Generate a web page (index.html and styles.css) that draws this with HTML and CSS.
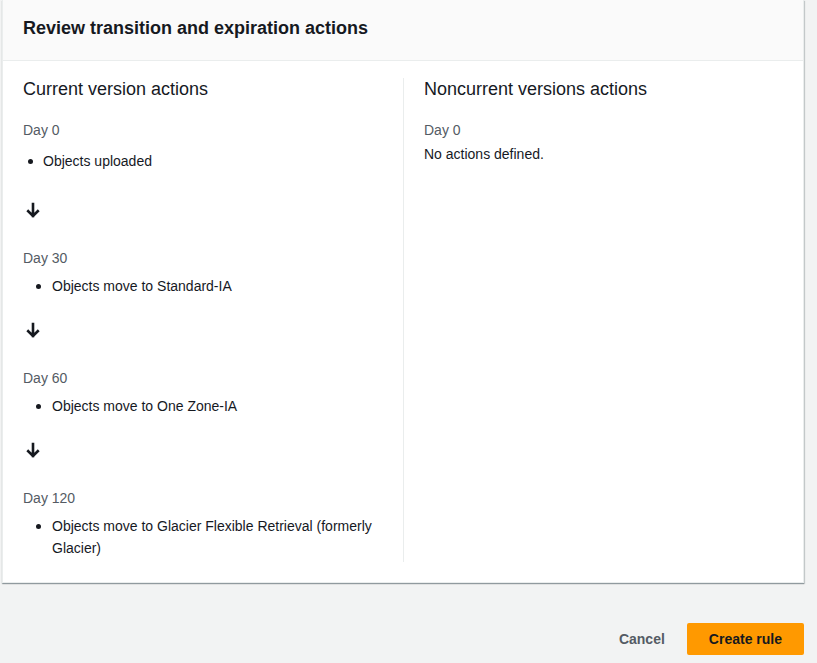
FILE: index.html
```html
<!DOCTYPE html>
<html lang="en">
<head>
<meta charset="utf-8">
<title>Review transition and expiration actions</title>
<link rel="stylesheet" href="styles.css">
</head>
<body>
<div class="page">
  <section class="card">
    <header class="card-header">
      <h1 class="card-title">Review transition and expiration actions</h1>
    </header>
    <div class="card-body">
      <div class="column">
        <h2 class="column-title">Current version actions</h2>
        <div class="day day-first">Day 0</div>
        <ul class="actions actions-first">
          <li>Objects uploaded</li>
        </ul>
        <div class="arrow arrow-first">
          <svg width="16" height="16" viewBox="0 0 16 16" aria-hidden="true"><path d="M8 2v12M3.2 9.2 8 14l4.8-4.8" fill="none" stroke="#16191f" stroke-width="2.6" stroke-linecap="square"/></svg>
        </div>
        <div class="day">Day 30</div>
        <ul class="actions">
          <li>Objects move to Standard-IA</li>
        </ul>
        <div class="arrow">
          <svg width="16" height="16" viewBox="0 0 16 16" aria-hidden="true"><path d="M8 2v12M3.2 9.2 8 14l4.8-4.8" fill="none" stroke="#16191f" stroke-width="2.6" stroke-linecap="square"/></svg>
        </div>
        <div class="day">Day 60</div>
        <ul class="actions">
          <li>Objects move to One Zone-IA</li>
        </ul>
        <div class="arrow">
          <svg width="16" height="16" viewBox="0 0 16 16" aria-hidden="true"><path d="M8 2v12M3.2 9.2 8 14l4.8-4.8" fill="none" stroke="#16191f" stroke-width="2.6" stroke-linecap="square"/></svg>
        </div>
        <div class="day">Day 120</div>
        <ul class="actions actions-last">
          <li>Objects move to Glacier Flexible Retrieval (formerly Glacier)</li>
        </ul>
      </div>
      <div class="column column-right">
        <h2 class="column-title">Noncurrent versions actions</h2>
        <div class="day day-first">Day 0</div>
        <p class="empty">No actions defined.</p>
      </div>
    </div>
  </section>
  <footer class="footer">
    <button class="btn btn-link" type="button">Cancel</button>
    <button class="btn btn-primary" type="button">Create rule</button>
  </footer>
</div>
</body>
</html>
```
FILE: styles.css
```css
* { box-sizing: border-box; }
html, body { margin: 0; padding: 0; }
body {
  background: #f2f3f3;
  color: #16191f;
  font-family: "Liberation Sans", Arial, sans-serif;
  font-size: 14px;
  line-height: 22px;
}
.page {
  padding: 0 13px 0 2px;
}
.card {
  background: #fff;
  border: 1px solid #eaeded;
  border-top: none;
  box-shadow: 0 1px 1px 0 rgba(0, 28, 36, 0.3), 1px 1px 1px 0 rgba(0, 28, 36, 0.15);
}
.card-header {
  background: #fafafa;
  border-bottom: 1px solid #eaeded;
  padding: 17px 20px 21px;
}
.card-title {
  margin: 0;
  font-size: 18px;
  line-height: 22px;
  font-weight: 700;
}
.card-body {
  display: grid;
  grid-template-columns: 1fr 1fr;
  padding: 17px 20px 20px;
}
.column-right {
  border-left: 1px solid #eaeded;
  padding-left: 20px;
}
.column-title {
  margin: 0;
  font-size: 18px;
  line-height: 22px;
  font-weight: 400;
}
.day {
  color: #545b64;
  margin-top: 29px;
}
.day-first { margin-top: 19px; }
.actions {
  list-style: none;
  margin: 6px 0 0;
  padding: 0;
}
.actions li {
  display: flex;
  align-items: flex-start;
}
.actions li::before {
  content: "";
  flex: 0 0 5px;
  width: 5px;
  height: 5px;
  border-radius: 50%;
  background: #16191f;
  margin: 9px 11px 0 13px;
}
.actions-first { margin-top: 9px; }
.actions-first li::before { margin: 9px 10px 0 5px; }
.actions-last { margin-bottom: 3px; }
.arrow {
  margin: 25px 0 0 2px;
  height: 16px;
}
.arrow svg { display: block; }
.arrow-first { margin-top: 30px; }
.empty { margin: 2px 0 0; }
.footer {
  display: flex;
  justify-content: flex-end;
  margin-top: 40px;
}
.btn {
  font-family: inherit;
  font-size: 14px;
  line-height: 20px;
  font-weight: 700;
  padding: 4px 20px;
  border: 2px solid transparent;
  border-radius: 2px;
  background: transparent;
  cursor: pointer;
}
.btn-link { color: #545b64; }
.btn-primary {
  background: #ff9900;
  border-color: #ff9900;
  color: #16191f;
}
```
